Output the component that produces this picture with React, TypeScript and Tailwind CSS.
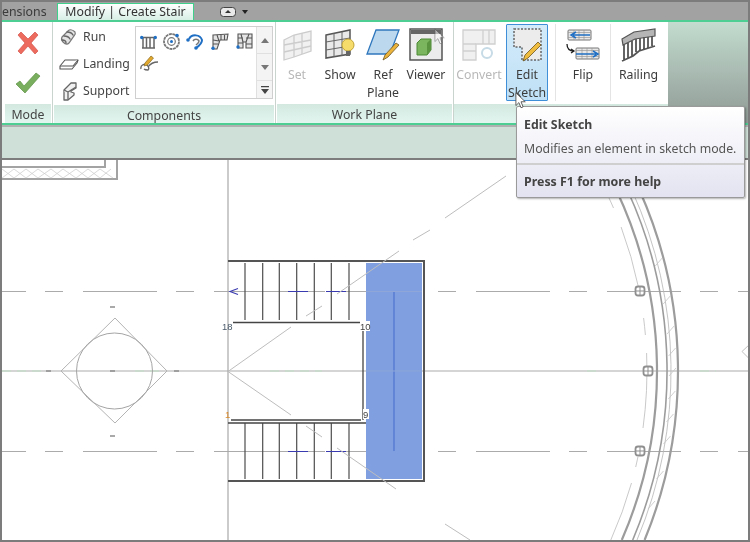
import type { ReactNode } from "react";

const arc = (r: number, y1: number, y2: number) => {
  const x = (y: number) => (234 + Math.sqrt(r * r - (y - 371) * (y - 371))).toFixed(1);
  return `M${x(y1)} ${y1}A${r} ${r} 0 0 1 ${x(y2)} ${y2}`;
};

const Panel = ({ title, width, children }: { title: string; width: string; children: ReactNode }) => (
  <div className={`flex flex-col shrink-0 border-r border-[#c9d4cf] ${width}`}>
    <div className="flex h-[84px] bg-white">{children}</div>
    <div className="h-[19px] overflow-hidden mx-[1px] bg-gradient-to-b from-[#d3e9e0] to-[#e2f6ef] text-center text-[12.3px] leading-[22px] text-[#444]">
      {title}
    </div>
  </div>
);

const Big = ({ label, width, disabled, active, children }: { label: string[]; width: string; disabled?: boolean; active?: boolean; children: ReactNode }) => (
  <div
    className={`flex flex-col items-center shrink-0 h-[77px] mt-[2px] ${width} ${
      active ? "border border-[#3f8ed8] bg-gradient-to-b from-[#d3ebfa] to-[#bfe0f6] rounded-[1px]" : "border border-transparent"
    }`}
  >
    <div className="h-[39px] mb-[2px] shrink-0 flex items-center justify-center">{children}</div>
    <div className={`shrink-0 text-center text-[12.3px] leading-[18px] ${disabled ? "text-[#b8b8b8]" : "text-[#3c3c3c]"}`}>
      {label.map((l) => (
        <div key={l}>{l}</div>
      ))}
    </div>
  </div>
);

const Small = ({ label, children }: { label: string; children: ReactNode }) => (
  <div className="flex items-center h-[27px] gap-[3px]">
    <div className="w-[22px] flex justify-center">{children}</div>
    <span className="text-[12.3px] text-[#444]">{label}</span>
  </div>
);

const Arrow = ({ className }: { className: string }) => (
  <svg width="12" height="17" viewBox="0 0 14 20" className={className}>
    <path d="M1 1v15l3.5-3.5 2.5 6 2.5-1-2.5-6H12z" fill="#fff" stroke="#555" strokeWidth="1.1" />
  </svg>
);

const GridMarker = ({ x, y }: { x: number; y: number }) => (
  <g stroke="#8f8f8f" fill="#fff">
    <rect x={x - 4.5} y={y - 4.5} width="9" height="9" rx="2.5" strokeWidth="1.8" />
    <path d={`M${x} ${y - 4}v8M${x - 4} ${y}h8`} strokeWidth="1" />
  </g>
);

const Canvas = () => {
  const treads = [245, 262.7, 279.3, 296.7, 314.3, 331.3, 349];
  const hatch = [262, 300, 330, 352, 372, 395, 418, 440, 475, 505];
  return (
    <svg viewBox="2 160 746 380" className="block w-[746px] h-[380px] bg-white">
      {/* wall corner, top left */}
      <g fill="none" stroke="#a3a3a3">
        <path d="M0 179h117v-19M0 167h105v-7" strokeWidth="2" />
        <path d="M2 169l12 9 12-9 12 9 13-9 12 9 13-9 12 9 12-9 13 9M2 178l12-9 12 9 12-9 13 9 12-9 13 9 12-9 12 9 11-9" strokeWidth="0.7" stroke="#c9c9c9" />
      </g>
      {/* reference planes */}
      <g stroke="#ababab" strokeWidth="1.2" fill="none">
        <path d="M-48 291.5H750M-48 451.5H750" strokeDasharray="74 19 18 20" />
        <path d="M0 371H750" />
      </g>
      <path d="M2 371H45M135 371H160M270 371H322M587 371H600M700 371H716" stroke="#bfe0c4" strokeWidth="1.2" strokeDasharray="9 6" />
      <path d="M228 160V540" stroke="#a8a8a8" strokeWidth="1.2" />
      {/* column */}
      <g fill="none" stroke="#b4b4b4" strokeWidth="1">
        <path d="M115 318L167 371 115 423 61 371z" />
        <circle cx="114.5" cy="371" r="38" stroke="#a5a5a5" />
      </g>
      <path d="M110 307h5M110 371h5M110 436h5M46 371h5M174 371h5" stroke="#8d8d8d" strokeWidth="1.5" />
      {/* stair */}
      <rect x="366" y="263" width="56" height="216" fill="#7f9fe0" />
      <path d="M394 292V451" stroke="#4f74cf" strokeWidth="1.2" />
      <path d="M366 291.5h56M366 371h56" stroke="#8ea6d8" strokeWidth="1" />
      <g stroke="#4d4d4d" strokeWidth="1.2">
        {treads.map((x) => (
          <path key={x} d={`M${x} 263V320M${x} 423V479`} />
        ))}
      </g>
      <path d="M228 261H424V481H228" fill="none" stroke="#555" strokeWidth="2" />
      <path d="M233 322.5H361M363 323V420M231 420H361M228 423H366" fill="none" stroke="#444" strokeWidth="1.3" />
      <path d="M288 291.5h20M326 291.5h20M288 451.5h20M326 451.5h20M238 288.5l-8 3 8 3" fill="none" stroke="#3a3ab0" strokeWidth="1.1" />
      <g stroke="#bdbdbd" strokeWidth="1" fill="none">
        <path d="M228 371.5L291 327M306 316L322 306M337 294L399 251M413 240L430 230M445 218L506 176M228 371.5L291 415M306 426L322 437M337 448L396 489M445 524L470 540" />
      </g>
      <rect x="360" y="321" width="10" height="10" fill="#fff" />
      <rect x="363" y="409" width="6" height="10" fill="#fff" />
      <g fontFamily="'Liberation Sans', sans-serif" fontSize="9.5">
        <text x="222" y="330" fill="#4a5a6a">18</text>
        <text x="360" y="330" fill="#444">10</text>
        <text x="363" y="418" fill="#444">9</text>
        <text x="225" y="418" fill="#d98a2a">1</text>
      </g>
      {/* curved wall */}
      <g fill="none" stroke="#9c9c9c">
        <path d={arc(423, 190, 540)} strokeWidth="2.2" />
        <path d={arc(444, 190, 540)} strokeWidth="2.2" />
        <path d={arc(433, 190, 540)} strokeWidth="1.6" />
        <path d={arc(437, 190, 540)} strokeWidth="0.8" stroke="#b5b5b5" />
        <path d={arc(413, 198, 208)} strokeWidth="0.8" stroke="#bbb" />
        <path d={arc(413, 227, 287)} strokeWidth="0.8" stroke="#bbb" />
        <path d={arc(413, 318, 335)} strokeWidth="0.8" stroke="#bbb" />
        <path d={arc(413, 353, 428)} strokeWidth="0.8" stroke="#bbb" />
        <path d={arc(413, 457, 467)} strokeWidth="0.8" stroke="#bbb" />
        <path d={arc(413, 483, 540)} strokeWidth="0.8" stroke="#bbb" />
      </g>
      <g stroke="#c4c4c4" strokeWidth="0.8">
        {hatch.map((y) => {
          const x = 234 + Math.sqrt(438 * 438 - (y - 371) * (y - 371));
          return <path key={y} d={`M${x - 3} ${y + 4}L${x + 4} ${y - 4}`} />;
        })}
      </g>
      <GridMarker x={640} y={291} />
      <GridMarker x={648} y={371} />
      <GridMarker x={640} y={451} />
      <path d="M750 344l-8 7.5 8 8" fill="none" stroke="#c0c0c0" />
    </svg>
  );
};

export default function App() {
  return (
    <div className="relative w-[750px] h-[542px] overflow-hidden flex flex-col border-2 border-[#7c7c7c] bg-[#a0a0a0] font-['Noto_Sans',sans-serif] blur-[0.4px]">
      {/* tabs */}
      <div className="flex h-[18px] items-end bg-[#a2a2a2]">
        <div className="w-[53px] h-[17px] overflow-hidden text-right pr-[11px] text-[12.3px] leading-[17px] text-[#3a3a3a]">ensions</div>
        <div className="ml-[2px] w-[137px] h-[17px] bg-gradient-to-b from-white to-[#d7efe6] border-x border-t border-[#3fd08c] text-center text-[12.3px] leading-[16px] text-[#333]">
          Modify | Create Stair
        </div>
        <div className="ml-[26px] self-center mt-[2px] flex items-center gap-[6px]">
          <svg width="16" height="10" viewBox="0 0 16 10">
            <rect x="0.5" y="0.5" width="15" height="9" rx="3" fill="#e9e9e9" stroke="#444" />
            <path d="M8 3l3 3H5z" fill="#333" />
          </svg>
          <svg width="6" height="4" viewBox="0 0 6 4">
            <path d="M0 0h6L3 4z" fill="#222" />
          </svg>
        </div>
      </div>
      {/* ribbon */}
      <div className="flex h-[105px] border-y-2 border-[#4fce94]">
        <div className="flex w-[666px] shrink-0 bg-white">
          <Panel title="Mode" width="w-[49px] ml-[2px]">
            <div className="flex flex-col items-center w-full pt-[8px] gap-[16px]">
              <svg width="26" height="26" viewBox="0 0 26 26">
                <path d="M3 5l3-3 7 7 7-7 3 3-7 8 7 8-3 3-7-8-7 8-3-3 7-8z" fill="#ec6a5e" stroke="#d4534a" strokeWidth="0.7" />
              </svg>
              <svg width="26" height="22" viewBox="0 0 26 22">
                <path d="M1 12l4-3 4 5L21 1l4 3L10 21z" fill="#79ae5f" stroke="#5d9245" strokeWidth="0.7" />
              </svg>
            </div>
          </Panel>
          <Panel title="Components" width="w-[223px]">
            <div className="flex flex-col w-[82px] pt-[2px] pl-[5px]">
              <Small label="Run">
                <svg width="20" height="20" viewBox="0 0 20 20" fill="none" strokeLinecap="round">
                  <path d="M3 9l6-6c2-2 5-1 7 1 1 2 0 3-1 4l-5 7c-2 2-4 1-6-1s-2-3-1-5z" fill="#e3e3e3" stroke="#777" strokeWidth="1.2" />
                  <path d="M8 4c3 0 5 1 6 3M5 8c3 0 5 1 6 3M3 12c2 0 4 1 4 3" stroke="#666" strokeWidth="1.4" />
                </svg>
              </Small>
              <Small label="Landing">
                <svg width="20" height="12" viewBox="0 0 20 12" fill="#fff" stroke="#555" strokeWidth="1.1" strokeLinejoin="round">
                  <path d="M6 1h13l-1 3-5 6H1V7z" />
                  <path d="M1 7h13l5-6" />
                </svg>
              </Small>
              <Small label="Support">
                <svg width="15" height="19" viewBox="0 0 15 19" fill="#f1f1f1" stroke="#666" strokeWidth="1.3" strokeLinejoin="round">
                  <path d="M2 18V8L9 1h5v5L9 9v1l3 1v2l-6 5z" />
                  <path d="M2 8l4 2v8M6 10l8-5" />
                </svg>
              </Small>
            </div>
            <div className="flex w-[138px] h-[73px] mt-[4px] border border-[#cfcfcf] bg-white">
              <div className="flex-1 pl-[4px] pt-[5px]">
                <div className="flex gap-[6px] items-center h-[18px]">
                  <svg width="17" height="15" viewBox="0 0 17 15" fill="none" stroke="#666" strokeWidth="1.5">
                    <path d="M3 4v10M6.5 4v10M10 4v10M14 4v10M1 3.5h15M2 14h13" />
                    <circle cx="1.7" cy="3.5" r="1.7" fill="#1f6fc4" stroke="none" />
                    <circle cx="15.3" cy="3.5" r="1.7" fill="#1f6fc4" stroke="none" />
                  </svg>
                  <svg width="17" height="17" viewBox="0 0 17 17" fill="none" stroke="#777">
                    <circle cx="8.5" cy="8.5" r="7.5" strokeWidth="1.8" strokeDasharray="3 0.6" />
                    <circle cx="8.5" cy="8.5" r="3.8" strokeWidth="1.2" />
                    <circle cx="8.5" cy="8.5" r="1.5" fill="#1f6fc4" stroke="none" />
                    <circle cx="14" cy="2.5" r="1.8" fill="#1f6fc4" stroke="none" />
                  </svg>
                  <svg width="19" height="18" viewBox="0 0 19 18" fill="none" stroke="#1f6fc4" strokeWidth="2">
                    <path d="M3 7a7 6.5 0 0 1 13 1c0 4-3 6-6 8" />
                    <path d="M7 9a3.5 3.5 0 0 1 6 0c0 2-2 3-3 4" stroke="#777" strokeWidth="1.5" />
                    <circle cx="2" cy="8" r="1.8" fill="#1f6fc4" stroke="none" />
                    <circle cx="10" cy="16" r="1.8" fill="#1f6fc4" stroke="none" />
                  </svg>
                  <svg width="18" height="17" viewBox="0 0 18 17" fill="#e4e4e4" stroke="#555" strokeWidth="1.1">
                    <path d="M2 2l15-1-1 6H9l-3 9H2z" />
                    <path d="M10 2v5M13.5 2v5M6 2l2 6M2 7l6 1M2 11h5" />
                    <circle cx="2" cy="15.3" r="1.7" fill="#1f6fc4" stroke="none" />
                  </svg>
                  <svg width="18" height="16" viewBox="0 0 18 16" fill="#e4e4e4" stroke="#555" strokeWidth="1.1">
                    <path d="M3 1h14v14h-6V9H8v6H3z" />
                    <path d="M6 1l2 8M14 1l-3 8M3 5h5M11 5h6M3 10h5M11 11h6" />
                    <circle cx="3" cy="14" r="1.7" fill="#1f6fc4" stroke="none" />
                  </svg>
                </div>
                <div className="mt-[5px]">
                  <svg width="19" height="16" viewBox="0 0 19 16" fill="none">
                    <path d="M1 14c-1-4 4-6 6-4s2 4 1 5c-1 0-3 0-4-1M8 12c2-3 4-5 10-5" stroke="#666" strokeWidth="1.3" />
                    <path d="M5 8l6-7 2.5 2-6 7-3.5 1z" fill="#e2a92e" stroke="#8a6a1e" strokeWidth="0.7" />
                  </svg>
                </div>
              </div>
              <div className="flex flex-col w-[16px] shrink-0 border-l border-[#e0e0e0] bg-[#f4f4f4]">
                <div className="h-[27px] flex items-center justify-center border-b border-[#e0e0e0]">
                  <svg width="8" height="5" viewBox="0 0 8 5"><path d="M4 0l4 5H0z" fill="#777" /></svg>
                </div>
                <div className="h-[27px] flex items-center justify-center border-b border-[#e0e0e0]">
                  <svg width="8" height="5" viewBox="0 0 8 5"><path d="M0 0h8L4 5z" fill="#777" /></svg>
                </div>
                <div className="flex-1 flex items-center justify-center">
                  <svg width="8" height="8" viewBox="0 0 8 8"><path d="M0 0h8v1.3H0zM0 3h8L4 8z" fill="#444" /></svg>
                </div>
              </div>
            </div>
          </Panel>
          <Panel title="Work Plane" width="w-[178px]">
            <div className="flex">
              <Big label={["Set"]} width="w-[42px]" disabled>
                <svg width="31" height="32" viewBox="0 0 31 32" fill="#f1f1f1" stroke="#ccc" strokeWidth="1.3">
                  <path d="M2 11L12 6 29 2v20l-17 6-10 3z" />
                  <path d="M12 6v22M20 4v21M2 16l27-5M2 23l27-6" />
                </svg>
              </Big>
              <Big label={["Show"]} width="w-[44px]">
                <svg width="32" height="33" viewBox="0 0 32 33">
                  <path d="M2 7l24-5v24L2 30z" fill="#e9e9e9" stroke="#555" strokeWidth="1.5" />
                  <path d="M10 5v24M18 4v24M2 14l24-4M2 22l24-4" stroke="#666" fill="none" />
                  <circle cx="24" cy="17" r="6" fill="#f5dc6b" stroke="#c2a436" />
                  <rect x="22" y="23" width="4" height="5" fill="#666" />
                </svg>
              </Big>
              <Big label={["Ref", "Plane"]} width="w-[42px]">
                <svg width="34" height="33" viewBox="0 0 34 33">
                  <path d="M10 2h23L24 26H1z" fill="#bcd8ef" stroke="#2f77bd" strokeWidth="1.3" />
                  <path d="M33 17L22 29l-5 3 2-5L30 15z" fill="#edb43c" stroke="#6d5520" strokeWidth="0.8" />
                </svg>
              </Big>
              <Big label={["Viewer"]} width="w-[44px]">
                <svg width="34" height="33" viewBox="0 0 34 33">
                  <rect x="1" y="1" width="32" height="31" fill="#ececec" stroke="#555" strokeWidth="1.5" />
                  <rect x="2" y="2" width="30" height="4" fill="#666" />
                  <path d="M8 15l4-4h10v11l-4 5H8z" fill="#7bb55d" stroke="#4d8a36" />
                  <path d="M18 15v12l4-5V11z" fill="#5a943f" />
                </svg>
              </Big>
            </div>
          </Panel>
          <div className="flex flex-col flex-1">
            <div className="flex h-[84px] bg-white">
              <Big label={["Convert"]} width="w-[50px]" disabled>
                <svg width="34" height="32" viewBox="0 0 34 32" fill="#f0f0f0" stroke="#cfcfcf" strokeWidth="1.3">
                  <path d="M1 1h32v14H14v16H1z" />
                  <path d="M21 1v14M27 1v14M1 15h13M1 22h13" />
                  <circle cx="25" cy="24" r="5" fill="none" stroke="#c6dbe6" strokeWidth="2" />
                </svg>
              </Big>
              <Big label={["Edit", "Sketch"]} width="w-[42px] ml-[2px]" active>
                <svg width="32" height="36" viewBox="0 0 32 36">
                  <path d="M3 2h27v31H11V20H3z" fill="#ececec" stroke="#666" strokeWidth="1.5" strokeDasharray="2 1.5" />
                  <path d="M30 18L17 31l-5 3 2-6L27 15z" fill="#f0bc3f" stroke="#6d5520" strokeWidth="0.8" />
                </svg>
              </Big>
              <div className="w-[1px] h-[77px] mt-[2px] ml-[7px] bg-[#e4e4e4]" />
              <Big label={["Flip"]} width="w-[54px]">
                <svg width="34" height="32" viewBox="0 0 34 32" fill="none">
                  <rect x="2" y="1" width="23" height="10" rx="1" fill="#e8e8e8" stroke="#777" />
                  <path d="M2 3.5h23M2 8.5h23M8 1v10M13 1v10M18 1v10" stroke="#999" strokeWidth="0.7" />
                  <path d="M24 6H7M10 3L5 6l5 3" stroke="#1f6fc4" strokeWidth="1.5" />
                  <rect x="10" y="19" width="23" height="11" rx="1" fill="#e8e8e8" stroke="#777" />
                  <path d="M10 21.5h23M10 27.5h23M16 19v11M21 19v11M26 19v11" stroke="#999" strokeWidth="0.7" />
                  <path d="M10 25h20M27 22l5 3-5 3" stroke="#1f6fc4" strokeWidth="1.5" />
                  <path d="M1 15c0 5 3 7 7 7M5 20l3 2-3 2" stroke="#222" strokeWidth="1.3" />
                </svg>
              </Big>
              <div className="w-[1px] h-[77px] mt-[2px] bg-[#e4e4e4]" />
              <Big label={["Railing"]} width="w-[55px]">
                <svg width="35" height="34" viewBox="0 0 35 34" fill="none" stroke="#555">
                  <path d="M1 11L13 4 34 1v7L14 11 2 17z" fill="#b5b5b5" strokeWidth="1.2" />
                  <path d="M3 17v15M7 15v16M11 13v15M15 11v13M19 10v13M23 9v12M27 9v11M31 8v10M1 33l11-5 6-5 16-5" strokeWidth="1.8" />
                </svg>
              </Big>
            </div>
            <div className="h-[19px] bg-gradient-to-b from-[#d3e9e0] to-[#e2f6ef]" />
          </div>
        </div>
        <div className="flex-1 bg-gradient-to-b from-[#c3dccf] to-[#8f9a95]" />
      </div>
      {/* options bar */}
      <div className="h-[35px] shrink-0 border-t-2 border-[#b0b0b0] border-b-2 border-b-[#7d7d7d] bg-[#cfe0d8]" />
      <Canvas />
      {/* tooltip */}
      <div className="absolute left-[514px] top-[104px] w-[229px] h-[92px] rounded-[2px] border border-[#9a9a9a] bg-gradient-to-b from-white to-[#e3e3f1] shadow-[1px_1px_2px_rgba(0,0,0,0.3)] text-[12.3px] text-[#555] flex flex-col px-[7px]">
        <div className="font-bold text-[#444] mt-[9px] leading-[18px]">Edit Sketch</div>
        <div className="mt-[6px] leading-[18px] whitespace-nowrap">Modifies an element in sketch mode.</div>
        <div className="-mx-[7px] mt-[5px] border-t-2 border-[#cfcfcf]" />
        <div className="font-bold text-[#444] mt-[8px] leading-[18px] text-[12.4px]">Press F1 for more help</div>
      </div>
      <Arrow className="absolute left-[513px] top-[90px]" />
      <Arrow className="absolute left-[432px] top-[26px] opacity-50" />
    </div>
  );
}
